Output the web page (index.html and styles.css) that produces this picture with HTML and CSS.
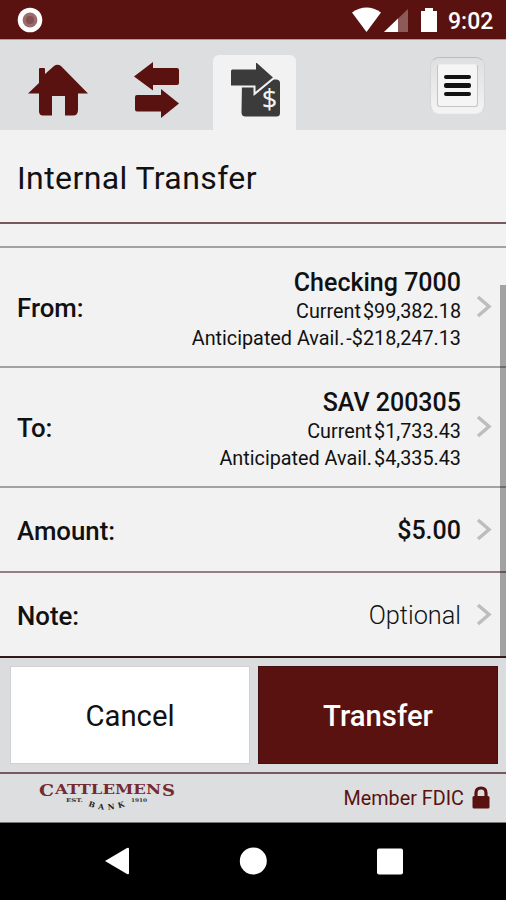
FILE: index.html
```html
<!DOCTYPE html>
<html lang="en">
<head>
    <meta charset="UTF-8">
    <meta name="viewport" content="width=device-width, initial-scale=1.0">
    <title>Internal Transfer</title>
    <link rel="stylesheet" href="styles.css">
</head>
<body>
    <div class="phone">
        <div class="statusBar">
            <svg class="recordIcon" width="26" height="26" viewBox="0 0 26 26">
                <circle cx="13" cy="13" r="12.3" fill="#fff"/>
                <circle cx="13" cy="13" r="7.4" fill="#9c6b6b"/>
                <circle cx="13" cy="13" r="4" fill="#875050"/>
            </svg>
            <svg class="signalIcons" width="88" height="26" viewBox="0 0 88 26">
                <path d="M0 5.5Q14.5 -4.5 29 5.5L14.5 25Z" fill="#fff"/>
                <path d="M32 25L56 2V25Z" fill="#8d5959"/>
                <path d="M32 25L46 11.5V25Z" fill="#fff"/>
                <path d="M73 1h8v3h4v21H69V4h4z" fill="#fff"/>
            </svg>
            <span class="time">9:02</span>
        </div>
        <div class="tabs">
            <a class="tab homeTab">
                <svg width="60" height="53" viewBox="0 0 60 53">
                    <path d="M11 5Q11 4 12 4H16Q17 4 17 5V10L26 2Q29.500 -.500 33 2L60 29.500H50V46Q50 51.500 45 51.500H37V32H24V51.500H15Q11 51.500 11 47V29.500H0L11 19Z" fill="#5a1210"/>
                </svg>
            </a>
            <a class="tab arrowsTab">
                <svg width="46" height="56" viewBox="0 0 46 56">
                    <path d="M0 14.500L19 0V6H43Q45 6 45 8V21Q45 23 43 23H19V28.500ZM45 41.500L27 27V33H3Q1 33 1 35V47.500Q1 49.500 3 49.500H27V56Z" fill="#5a1210"/>
                </svg>
            </a>
            <a class="tab active">
                <svg width="52" height="56" viewBox="0 0 52 56">
                    <path d="M12 20H40L43 17.500H46Q50 17.500 50 21V51Q50 54.500 46.500 54.500H15.500Q11.500 54.500 11.500 50.500Z" fill="#3b3b3b"/>
                    <path d="M0 9Q0 6.500 2.500 6.500H25V-2L44.500 15.500L24.500 32V24.500H0Z" fill="#3b3b3b" stroke="#f2f2f2" stroke-width="2"/>
                    <text x="39.500" y="47" text-anchor="middle" class="dollar">$</text>
                </svg>
            </a>
            <button class="menu"><span class="menuFace"><i></i><i></i><i></i></span></button>
        </div>
        <h1>Internal Transfer</h1>
        <div class="list">
            <div class="row account">
                <span class="label">From:</span>
                <div class="value">
                    <b>Checking 7000</b>
                    <span>Current<em>$99,382.18</em></span>
                    <span>Anticipated Avail.<em>-$218,247.13</em></span>
                </div>
                <svg class="chevron" width="16" height="24" viewBox="0 0 16 24"><path d="M2 2L13 11.500L2 21"/></svg>
            </div>
            <div class="row account">
                <span class="label">To:</span>
                <div class="value">
                    <b>SAV 200305</b>
                    <span>Current<em>$1,733.43</em></span>
                    <span>Anticipated Avail.<em>$4,335.43</em></span>
                </div>
                <svg class="chevron" width="16" height="24" viewBox="0 0 16 24"><path d="M2 2L13 11.500L2 21"/></svg>
            </div>
            <div class="row amount">
                <span class="label">Amount:</span>
                <div class="value"><b>$5.00</b></div>
                <svg class="chevron" width="16" height="24" viewBox="0 0 16 24"><path d="M2 2L13 11.500L2 21"/></svg>
            </div>
            <div class="row note">
                <span class="label">Note:</span>
                <div class="value optional">Optional</div>
                <svg class="chevron" width="16" height="24" viewBox="0 0 16 24"><path d="M2 2L13 11.500L2 21"/></svg>
            </div>
            <div class="scrollbar"></div>
        </div>
        <div class="actions">
            <button class="cancel">Cancel</button>
            <button class="transfer">Transfer</button>
        </div>
        <div class="footer">
            <svg class="logo" width="138" height="32" viewBox="0 0 138 32">
                <defs><path id="bankArc" d="M49 24Q67 31.500 88 23.500"/></defs>
                <text x="0" y="14" class="logoName bigLetter" textLength="15" lengthAdjust="spacingAndGlyphs">C</text>
                <text x="16" y="12" class="logoName" textLength="106" lengthAdjust="spacingAndGlyphs">ATTLEMEN</text>
                <text x="123" y="14" class="logoName bigLetter" textLength="13" lengthAdjust="spacingAndGlyphs">S</text>
                <text x="27" y="20" class="logoSmall" textLength="17" lengthAdjust="spacingAndGlyphs">EST.</text>
                <text class="logoBank"><textPath href="#bankArc" textLength="38">BANK</textPath></text>
                <text x="92" y="20" class="logoSmall" textLength="16" lengthAdjust="spacingAndGlyphs">1910</text>
            </svg>
            <span class="member">Member FDIC</span>
            <svg class="lock" width="18" height="23" viewBox="0 0 18 23">
                <path d="M4 11V7Q4 2 9 2T14 7V11" fill="none" stroke="#5a1210" stroke-width="3.200"/>
                <rect x=".5" y="10" width="17" height="12.500" rx="1.500" fill="#5a1210"/>
            </svg>
        </div>
        <div class="navBar">
            <svg width="506" height="76" viewBox="0 0 506 76">
                <path d="M105 38L127 25Q129 24 129 26V50Q129 52 127 51Z" fill="#fff"/>
                <circle cx="253.300" cy="38" r="13.500" fill="#fff"/>
                <rect x="377" y="25.500" width="26" height="26" rx="2" fill="#fff"/>
            </svg>
        </div>
    </div>
</body>
</html>
```
FILE: styles.css
```css
* {
    box-sizing: border-box;
}
body {
    margin: 0;
    font-family: Roboto, "Liberation Sans", sans-serif;
    color: #111;
}
.phone {
    width: 506px;
    height: 900px;
    display: flex;
    flex-direction: column;
    overflow: hidden;
    background: #f2f2f2;
}
.statusBar {
    height: 40px;
    flex: none;
    display: flex;
    align-items: center;
    padding: 0 12px 0 17px;
    background: #5a1210;
    border-bottom: 1px solid #b29c9c;
}
.signalIcons {
    margin-left: auto;
}
.time {
    width: 46px;
    margin-left: 8px;
    font-size: 23px;
    font-weight: 500;
    color: #fff;
    white-space: nowrap;
    padding-top: 3px;
}
.tabs {
    height: 90px;
    flex: none;
    display: flex;
    align-items: flex-start;
    background: #dcdedf;
}
.homeTab {
    padding: 24px 0 0 28px;
}
.arrowsTab {
    padding: 22px 0 0 46px;
}
.tab svg {
    display: block;
}
.active {
    width: 83px;
    height: 75px;
    margin: 15px 0 0 33px;
    padding: 7px 0 0 17px;
    background: #f2f2f2;
    border-radius: 6px 6px 0 0;
}
.dollar {
    font: 27px "Noto Sans", sans-serif;
    fill: #f2f2f2;
}
.menu {
    width: 55px;
    height: 57px;
    margin: 17px 21px 0 auto;
    padding: 6px;
    border: 1px solid #c9cbcc;
    border-color: #b9bbbc #d5d6d7 #eee;
    border-radius: 9px;
    background: linear-gradient(#dedfe0, #f4f4f4);
}
.menuFace {
    height: 43px;
    display: flex;
    flex-direction: column;
    justify-content: center;
    align-items: center;
    gap: 4px;
    border: 1px solid #c4c4c4;
    border-top-color: #eee;
    border-radius: 3px;
    background: #f5f5f5;
}
.menuFace i {
    width: 27px;
    height: 4.500px;
    border-radius: 2px;
    background: #111;
}
h1 {
    height: 94px;
    flex: none;
    margin: 0;
    padding: 0 17px 0;
    border-bottom: 2px solid #75595d;
    font-size: 32px;
    letter-spacing: 0.4px;
    font-weight: 400;
    line-height: 96px;
}
.list {
    position: relative;
    height: 432px;
    flex: none;
    padding-top: 22px;
}
.row {
    display: flex;
    align-items: center;
    padding: 0 14px 0 17px;
    border-top: 2px solid #a3a1a2;
}
.account {
    height: 120px;
}
.amount {
    height: 85px;
}
.note {
    height: 85px;
    border-top-color: #948083;
}
.label {
    font-size: 25.800px;
    font-weight: 500;
    padding-top: 2px;
}
.value {
    display: flex;
    flex-direction: column;
    align-items: flex-end;
    margin-left: auto;
    padding-top: 2px;
    font-size: 19.800px;
    line-height: 27px;
}
.account .value {
    padding-top: 6px;
}
.value b {
    font-size: 25px;
    font-weight: 500;
    line-height: 30px;
}
.value em {
    font-style: normal;
    margin-left: 2px;
}
.value.optional {
    font-size: 25.300px;
    font-weight: 300;
}
.chevron {
    margin-left: 15px;
    fill: none;
    stroke: #bdbdbd;
    stroke-width: 3.500;
}
.scrollbar {
    position: absolute;
    right: 0;
    top: 61px;
    width: 6px;
    bottom: 0;
    background: rgba(0, 0, 0, 0.33);
}
.actions {
    height: 116px;
    flex: none;
    display: flex;
    gap: 8px;
    padding: 8px 8px 8px 10px;
    border-top: 2px solid #30191b;
    background: #dadcde;
}
.actions button {
    flex: 1;
    height: 98px;
    padding: 1px 0 0;
    border-radius: 0;
    font-family: inherit;
    font-size: 29.300px;
}
.cancel {
    border: 1px solid #d0d1d2;
    background: #fff;
    color: #111;
}
.transfer {
    border: 1px solid #421010;
    background: #5a1210;
    color: #fff;
    font-weight: 500;
}
.footer {
    height: 51px;
    flex: none;
    display: flex;
    align-items: center;
    padding: 0 16px 0 39px;
    border-top: 2px solid #75595d;
    border-bottom: 1px solid #777;
    background: #dcdedf;
}
.logoName {
    font: bold 12px "DejaVu Serif", serif;
    fill: #742b30;
}
.bigLetter {
    font-size: 16px;
}
.logoSmall {
    font: bold 5px "DejaVu Serif", serif;
    fill: #333;
}
.logoBank {
    font: bold 7.500px "DejaVu Serif", serif;
    fill: #222;
}
.member {
    margin-left: auto;
    font-size: 19.800px;
    color: #5a1210;
}
.lock {
    margin: 0 0 2px 8px;
}
.navBar {
    height: 77px;
    flex: none;
    background: #000;
}
```
